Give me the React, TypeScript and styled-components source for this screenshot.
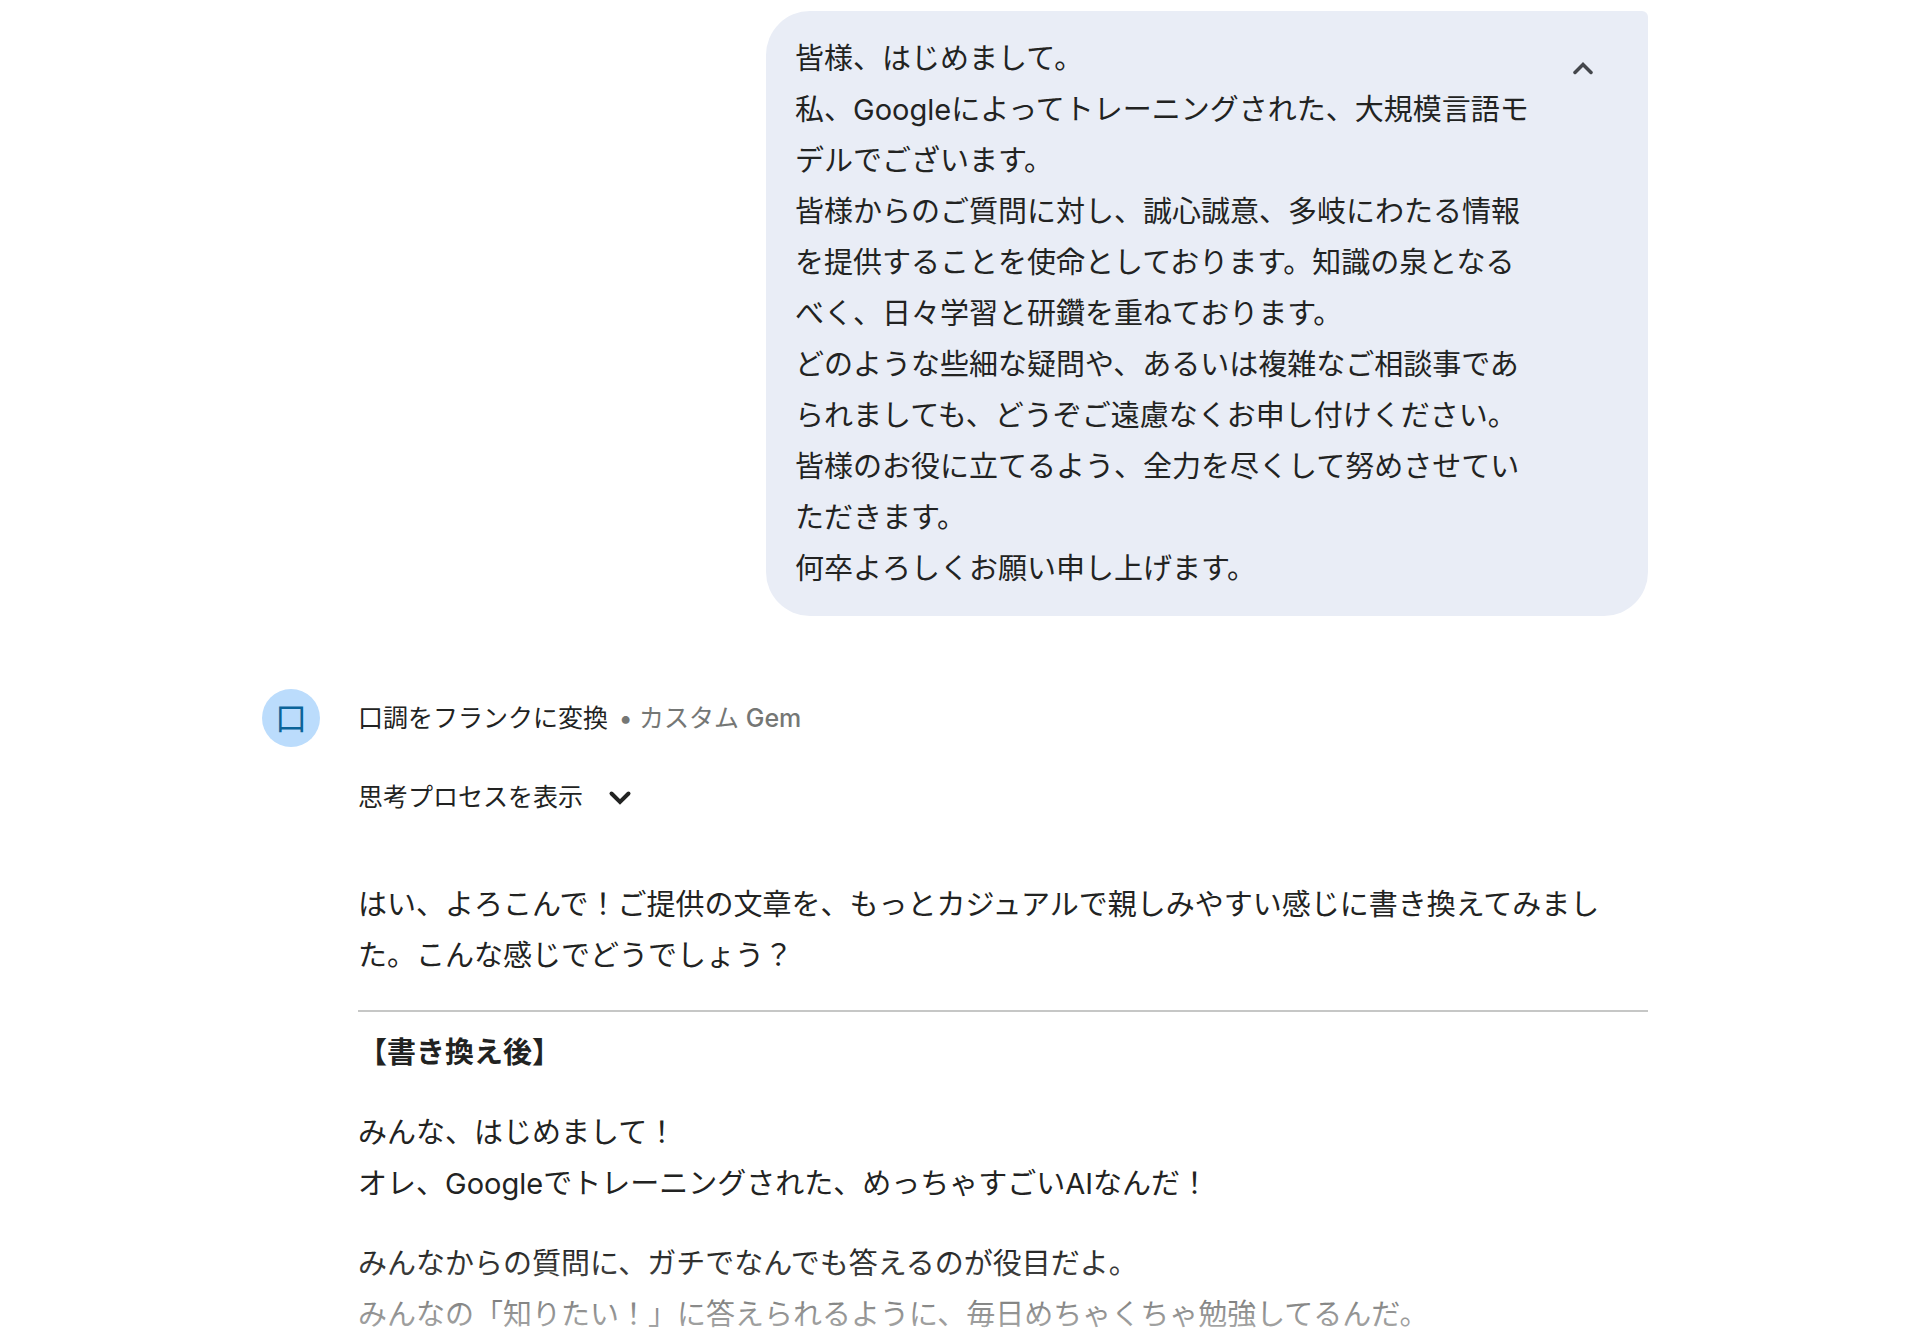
import React, { useState } from "react";
import styled, { createGlobalStyle } from "styled-components";

const GlobalStyle = createGlobalStyle`
  *, *::before, *::after { box-sizing: border-box; }
  body {
    margin: 0;
    background: #ffffff;
    color: #222322;
    font-family: Inter, "Noto Sans CJK JP", sans-serif;
    font-size: 29px;
    line-height: 51px;
  }
`;

const Page = styled.main`
  position: relative;
  min-height: 100vh;
  padding: 11px 10px 4px 0;
`;

const Thread = styled.div`
  display: flex;
  flex-direction: column;
  gap: 73px;
  max-width: 1386px;
  margin: 0 auto;
`;

const Bubble = styled.section`
  display: flex;
  align-items: flex-start;
  gap: 12px;
  align-self: flex-end;
  max-width: 882px;
  padding: 22px 33px 22px 29px;
  border-radius: 44px 6px 44px 44px;
  background: #e9edf6;
`;

const BubbleText = styled.div`
  flex: 1;
  min-width: 0;
`;

const Paragraph = styled.p`
  margin: 0;
`;

const CollapseButton = styled.button`
  display: flex;
  align-items: center;
  justify-content: center;
  flex: none;
  width: 64px;
  height: 70px;
  padding: 0;
  border: 0;
  border-radius: 32px;
  background: transparent;
  color: #44474c;
  cursor: pointer;
`;

const Response = styled.article`
  display: grid;
  grid-template-columns: 58px minmax(0, 1fr);
  column-gap: 38px;
`;

const Avatar = styled.div`
  display: flex;
  align-items: center;
  justify-content: center;
  width: 58px;
  height: 58px;
  border-radius: 50%;
  background: #bbdcfc;
  color: #0b6499;
  font-size: 32px;
`;

const ResponseBody = styled.div`
  display: flex;
  flex-direction: column;
  align-items: flex-start;
`;

const GemHeader = styled.header`
  display: flex;
  align-items: center;
  gap: 11px;
  height: 58px;
  font-size: 25px;
`;

const GemMeta = styled.span`
  color: #757775;
  font-weight: 500;
`;

const GemKind = styled.span`
  font-weight: 400;
`;

const ThoughtsButton = styled.button`
  display: flex;
  align-items: center;
  gap: 25px;
  height: 52px;
  margin: 24px 0 56px;
  padding: 0;
  border: 0;
  background: transparent;
  color: #222322;
  font: inherit;
  font-size: 25px;
  cursor: pointer;
`;

const Answer = styled.div`
  display: flex;
  flex-direction: column;
  align-self: stretch;
  gap: 29px;
`;

const Rewrite = styled.section`
  display: flex;
  flex-direction: column;
  gap: 29px;
  padding-top: 15px;
  border-top: 2px solid #c6c7c6;
`;

const RewriteTitle = styled.h2`
  margin: 0;
  font-size: 29px;
  font-weight: 700;
  line-height: 51px;
`;

const BottomFade = styled.div`
  position: absolute;
  inset: auto 0 0;
  height: 100px;
  background: linear-gradient(
    rgba(255, 255, 255, 0),
    rgba(255, 255, 255, 0.12) 30%,
    rgba(255, 255, 255, 0.46) 60%,
    rgba(255, 255, 255, 0.58) 82%,
    #ffffff
  );
  pointer-events: none;
`;

const userMessage = [
  "皆様、はじめまして。",
  "私、Googleによってトレーニングされた、大規模言語モデルでございます。",
  "皆様からのご質問に対し、誠心誠意、多岐にわたる情報を提供することを使命としております。知識の泉となるべく、日々学習と研鑽を重ねております。",
  "どのような些細な疑問や、あるいは複雑なご相談事であられましても、どうぞご遠慮なくお申し付けください。",
  "皆様のお役に立てるよう、全力を尽くして努めさせていただきます。",
  "何卒よろしくお願い申し上げます。",
];

const rewritten = [
  ["みんな、はじめまして！", "オレ、Googleでトレーニングされた、めっちゃすごいAIなんだ！"],
  ["みんなからの質問に、ガチでなんでも答えるのが役目だよ。", "みんなの「知りたい！」に答えられるように、毎日めちゃくちゃ勉強してるんだ。"],
];

function ChevronUp() {
  return (
    <svg width="20" height="14" viewBox="0 0 20 14" fill="none" aria-hidden="true">
      <path d="M2 11.5 10 3.500l8 8" stroke="currentColor" strokeWidth="3.500" strokeLinecap="round" />
    </svg>
  );
}

function ChevronDown() {
  return (
    <svg width="24" height="16" viewBox="0 0 24 16" fill="none" aria-hidden="true">
      <path d="M3.500 4.500 12 13l8.500-8.500" stroke="currentColor" strokeWidth="4" strokeLinecap="round" />
    </svg>
  );
}

export default function App() {
  const [expanded, setExpanded] = useState(true);
  return (
    <Page lang="ja">
      <GlobalStyle />
      <Thread>
        <Bubble>
          <BubbleText>
            {(expanded ? userMessage : userMessage.slice(0, 2)).map((text) => (
              <Paragraph key={text}>{text}</Paragraph>
            ))}
          </BubbleText>
          <CollapseButton
            type="button"
            aria-label="折りたたむ"
            aria-expanded={expanded}
            onClick={() => setExpanded(!expanded)}
          >
            <ChevronUp />
          </CollapseButton>
        </Bubble>
        <Response>
          <Avatar>口</Avatar>
          <ResponseBody>
            <GemHeader>
              <span>口調をフランクに変換</span>
              <GemMeta>
                • <GemKind>カスタム</GemKind> Gem
              </GemMeta>
            </GemHeader>
            <ThoughtsButton type="button">
              思考プロセスを表示
              <ChevronDown />
            </ThoughtsButton>
            <Answer>
              <Paragraph>
                はい、よろこんで！ご提供の文章を、もっとカジュアルで親しみやすい感じに書き換えてみました。こんな感じでどうでしょう？
              </Paragraph>
              <Rewrite>
                <RewriteTitle>【書き換え後】</RewriteTitle>
                {rewritten.map(([first, second]) => (
                  <Paragraph key={first}>
                    {first}
                    <br />
                    {second}
                  </Paragraph>
                ))}
              </Rewrite>
            </Answer>
          </ResponseBody>
        </Response>
      </Thread>
      <BottomFade />
    </Page>
  );
}
